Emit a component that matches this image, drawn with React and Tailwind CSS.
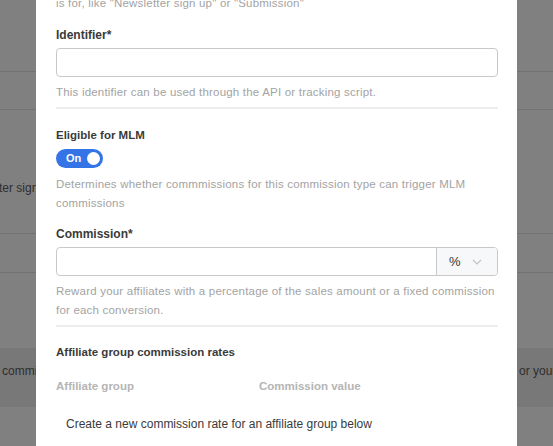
import React from "react";

const font = { fontFamily: '"Liberation Sans", Arial, sans-serif' };

function Strip({ side }) {
  const left = side === "left";
  return (
    <div className="w-[36px] shrink-0 h-full overflow-hidden flex flex-col bg-[#808080] text-[12px] text-[#2e2e2e]">
      <div className="h-[72px] shrink-0 border-b border-[#727272]" />
      <div className="h-[38px] shrink-0 border-b border-[#727272]" />
      <div className="h-[124px] shrink-0 border-b border-[#727272] pt-[69px] whitespace-nowrap">
        {left ? <span className="block -ml-[1px]">ter sign up</span> : null}
      </div>
      <div className="h-[39px] shrink-0 border-b border-[#727272]" />
      <div className="h-[75px] shrink-0" />
      <div className="h-[59px] shrink-0 bg-[#787878] pt-[14px] whitespace-nowrap">
        <span className="block pl-[2px]">{left ? "commission" : "or your"}</span>
      </div>
      <div className="flex-1" />
    </div>
  );
}

export default function App() {
  return (
    <div className="w-[553px] h-[446px] overflow-hidden flex bg-[#808080]" style={font}>
      <Strip side="left" />
      <div className="w-[481px] shrink-0 h-full bg-white overflow-hidden">
        <div className="pl-[20px] pr-[19px] -mt-[6px] text-[11.5px] leading-[19px]">
          <p className="text-[#a3a3a3] tracking-[0.2px]">is for, like "Newsletter sign up" or "Submission"</p>

          <p className="mt-[13px] font-bold text-[#3a3a3a] text-[12px]">Identifier*</p>
          <div className="mt-[3px] h-[29px] rounded-[4px] border border-[#c8c8c8]" />
          <p className="mt-[6px] text-[#a3a3a3] tracking-[0.2px]">This identifier can be used through the API or tracking script.</p>
          <div className="mt-[5px] h-[2px] bg-[#ececec]" />

          <p className="mt-[17px] font-bold text-[#3a3a3a] text-[11.5px]">Eligible for MLM</p>
          <div className="mt-[4px] w-[47px] h-[19px] rounded-full bg-[#3474e6] flex items-center justify-between pl-[10px] pr-[3px]">
            <span className="text-white font-bold text-[11px] leading-none">On</span>
            <span className="w-[13px] h-[13px] rounded-full bg-white" />
          </div>
          <p className="mt-[7px] text-[#a3a3a3] tracking-[0.2px]">
            Determines whether commmissions for this commission type can trigger MLM commissions
          </p>

          <p className="mt-[12px] font-bold text-[#3a3a3a] text-[12px]">Commission*</p>
          <div className="mt-[3px] h-[29px] rounded-[4px] border border-[#c8c8c8] flex overflow-hidden">
            <div className="flex-1" />
            <div className="w-[61px] border-l border-[#c8c8c8] bg-[#f7f8fa] flex items-center pl-[12px] gap-[11px]">
              <span className="text-[#333] text-[13px]">%</span>
              <svg width="10" height="6" viewBox="0 0 10 6" fill="none">
                <path d="M1 1l4 4 4-4" stroke="#c4c4c4" strokeWidth="1.2" />
              </svg>
            </div>
          </div>
          <p className="mt-[6px] text-[#a3a3a3] tracking-[0.2px]">
            Reward your affiliates with a percentage of the sales amount or a fixed commission for each conversion.
          </p>
          <div className="mt-[5px] h-[2px] bg-[#ececec]" />

          <p className="mt-[16px] font-bold text-[#3a3a3a] text-[11.5px]">Affiliate group commission rates</p>
          <div className="mt-[15px] flex font-bold text-[#b5b5b5] text-[11.5px]">
            <span className="w-[203px]">Affiliate group</span>
            <span>Commission value</span>
          </div>
          <p className="mt-[19px] pl-[10px] text-[#3a3a3a] text-[12px]">
            Create a new commission rate for an affiliate group below
          </p>
        </div>
      </div>
      <Strip side="right" />
    </div>
  );
}
